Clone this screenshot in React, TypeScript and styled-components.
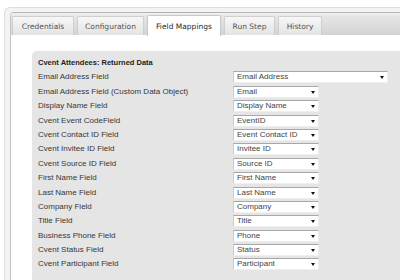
import { Fragment } from 'react'
import styled, { createGlobalStyle } from 'styled-components'

const GlobalStyle = createGlobalStyle`
  html, body {
    margin: 0;
    padding: 0;
    background: #ffffff;
    overflow: hidden;
  }
  body {
    width: 400px;
    height: 280px;
  }
`

const TABS = [
  { label: 'Credentials', width: 62 },
  { label: 'Configuration', width: 67 },
  { label: 'Field Mappings', width: 74, active: true },
  { label: 'Run Step', width: 51 },
  { label: 'History', width: 44 },
]

const ROWS = [
  { label: 'Email Address Field', value: 'Email Address', wide: true },
  { label: 'Email Address Field (Custom Data Object)', value: 'Email' },
  { label: 'Display Name Field', value: 'Display Name' },
  { label: 'Cvent Event CodeField', value: 'EventID' },
  { label: 'Cvent Contact ID Field', value: 'Event Contact ID' },
  { label: 'Cvent Invitee ID Field', value: 'Invitee ID' },
  { label: 'Cvent Source ID Field', value: 'Source ID' },
  { label: 'First Name Field', value: 'First Name' },
  { label: 'Last Name Field', value: 'Last Name' },
  { label: 'Company Field', value: 'Company' },
  { label: 'Title Field', value: 'Title' },
  { label: 'Business Phone Field', value: 'Phone' },
  { label: 'Cvent Status Field', value: 'Status' },
  { label: 'Cvent Participant Field', value: 'Participant' },
]

const St = {
  Frame: styled.div`
    box-sizing: border-box;
    height: 273px;
    margin: 7px 0 0 4px;
    padding: 4px 0 0 5px;
    border: 1px solid #dedede;
    border-right: none;
    border-bottom: none;
    border-radius: 6px 0 0 0;
    background: #f3f3f3;
    overflow: hidden;
  `,
  Widget: styled.div`
    display: flex;
    flex-direction: column;
    height: 100%;
    border-left: 1px solid #c4c4c4;
    border-top: 1px solid #b4b4b4;
    border-radius: 4px 0 0 0;
    background: #ffffff;
    overflow: hidden;
  `,
  TabBar: styled.ul`
    display: flex;
    flex: none;
    align-items: flex-end;
    gap: 3px;
    height: 22px;
    margin: 0;
    padding: 0 0 0 1px;
    list-style: none;
    background: linear-gradient(#f2f2f2 0px, #e6e6e6 3px, #d3d3d3 100%);
    position: relative;
    z-index: 1;
  `,
  Tab: styled.li<{ $active?: boolean; $width: number }>`
    display: flex;
    align-items: center;
    justify-content: center;
    box-sizing: border-box;
    width: ${({ $width }) => $width}px;
    height: ${({ $active }) => ($active ? 21 : 19)}px;
    margin-bottom: ${({ $active }) => ($active ? -1 : 0)}px;
    padding-top: ${({ $active }) => ($active ? 0 : 1)}px;
    border: 1px solid ${({ $active }) => ($active ? '#c8c8c8' : '#cfcfcf')};
    border-bottom: none;
    border-radius: 2px 2px 0 0;
    background: ${({ $active }) =>
      $active ? '#ffffff' : 'linear-gradient(#f7f7f7, #e3e3e3)'};
    color: ${({ $active }) => ($active ? '#2a2a2a' : '#555555')};
    font-family: 'DejaVu Sans', Verdana, sans-serif;
    font-size: 7.5px;
    white-space: nowrap;
  `,
  Panel: styled.div`
    display: flex;
    flex: 1;
    min-height: 0;
    padding: 16px 0 0 21px;
    background: #ffffff;
  `,
  Section: styled.div`
    flex: 1;
    display: grid;
    grid-template-columns: 195px auto;
    grid-auto-rows: 12px;
    row-gap: 2.4px;
    align-items: center;
    align-content: start;
    padding: 6px 0 0 6px;
    border-radius: 5px 0 0 0;
    background: #e5e5e5;
    font-family: 'Liberation Sans', Arial, sans-serif;
    overflow: hidden;
  `,
  Heading: styled.div`
    grid-column: 1 / -1;
    font-size: 7.5px;
    font-weight: bold;
    color: #222222;
    line-height: 12px;
  `,
  Label: styled.div`
    font-size: 8px;
    color: #373737;
    line-height: 12px;
    white-space: nowrap;
  `,
  Select: styled.div<{ $wide?: boolean }>`
    position: relative;
    box-sizing: border-box;
    width: ${({ $wide }) => ($wide ? 155 : 86)}px;
    height: 12px;
    padding-left: 3px;
    border-top: 1px solid #a8a8a8;
    border-left: 1px solid #cbcbcb;
    border-right: 1px solid #efefef;
    border-bottom: 1px solid #efefef;
    background: #ffffff;
    color: #444444;
    font-size: 8px;
    line-height: 10px;
    white-space: nowrap;
  `,
  Arrow: styled.span`
    position: absolute;
    right: 3px;
    top: 4px;
    width: 0;
    height: 0;
    border-left: 2.5px solid transparent;
    border-right: 2.5px solid transparent;
    border-top: 3px solid #111111;
  `,
}

const App = () => {
  return (
    <>
      <GlobalStyle />
      <St.Frame>
        <St.Widget>
          <St.TabBar>
            {TABS.map((tab) => (
              <St.Tab key={tab.label} $active={tab.active} $width={tab.width}>
                {tab.label}
              </St.Tab>
            ))}
          </St.TabBar>
          <St.Panel>
            <St.Section>
              <St.Heading>Cvent Attendees: Returned Data</St.Heading>
              {ROWS.map((row) => (
                <Fragment key={row.label}>
                  <St.Label>{row.label}</St.Label>
                  <St.Select $wide={row.wide}>
                    {row.value}
                    <St.Arrow />
                  </St.Select>
                </Fragment>
              ))}
            </St.Section>
          </St.Panel>
        </St.Widget>
      </St.Frame>
    </>
  )
}

export default App
